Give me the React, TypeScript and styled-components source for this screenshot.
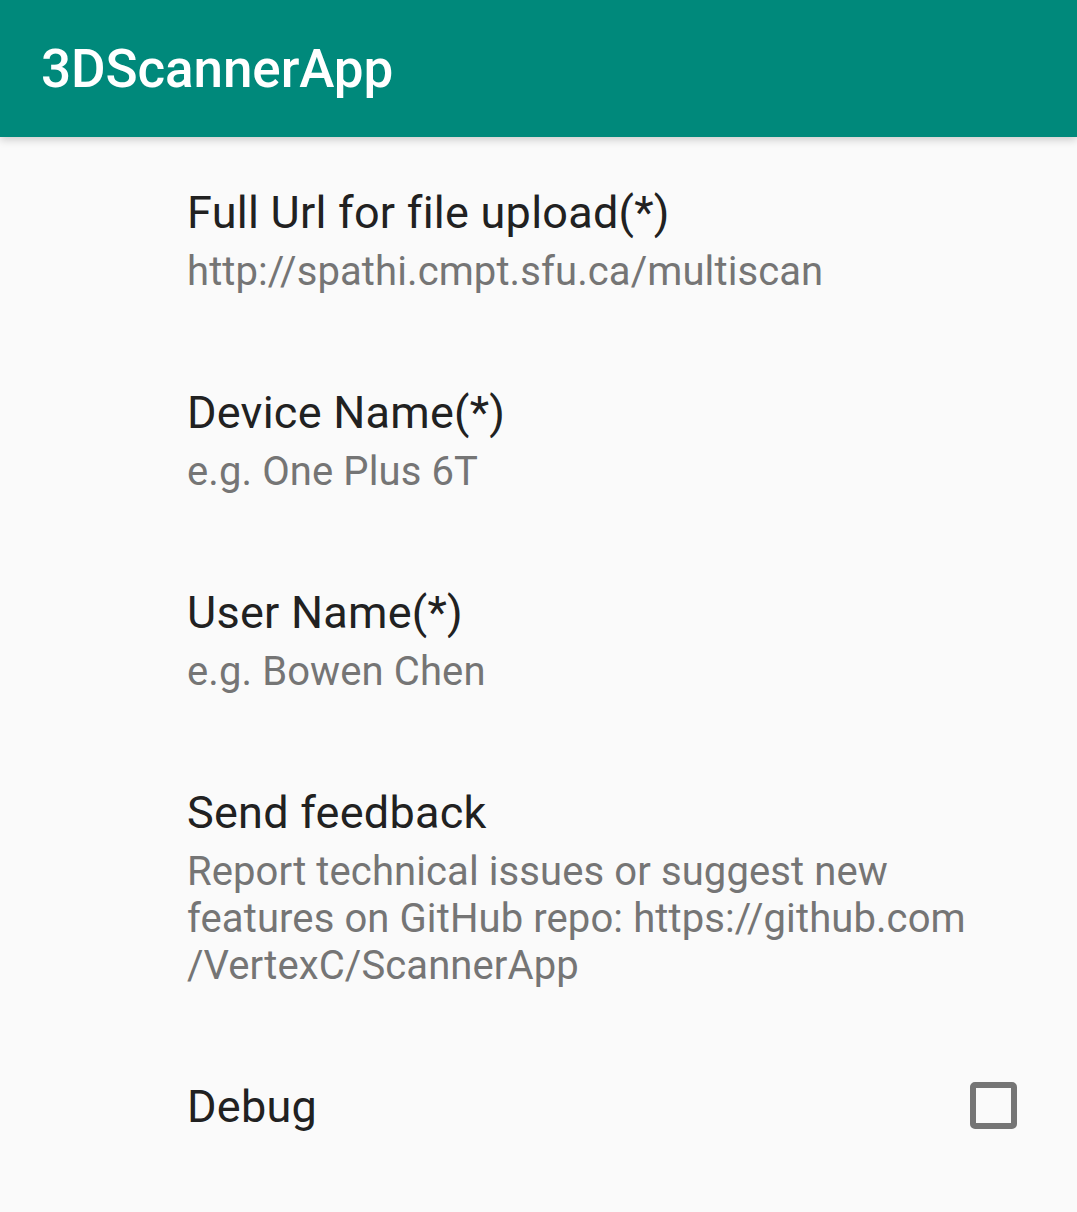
import React from "react";
import styled, { createGlobalStyle } from "styled-components";

const GlobalStyle = createGlobalStyle`
  html, body {
    margin: 0;
    padding: 0;
    background: #fafafa;
  }
  body {
    font-family: Roboto, "Noto Sans", "Liberation Sans", sans-serif;
  }
  * { box-sizing: border-box; }
`;

const Page = styled.div`
  width: 1077px;
  min-height: 1212px;
  background: #fafafa;
  display: flex;
  flex-direction: column;
`;

const AppBar = styled.header`
  height: 137px;
  background: #00897b;
  display: flex;
  align-items: center;
  padding-left: 41px;
  box-shadow: 0 3px 8px rgba(0, 0, 0, 0.18);
  position: relative;
  z-index: 1;
`;

const AppTitle = styled.h1`
  margin: 0;
  font-family: Roboto, sans-serif;
  font-weight: 500;
  font-size: 53px;
  color: #ffffff;
  letter-spacing: -0.1px;
`;

const List = styled.div`
  display: flex;
  flex-direction: column;
`;

const Item = styled.div`
  display: flex;
  align-items: center;
  padding: 50px 60px 42px 187px;
`;

const ItemText = styled.div`
  flex: 1;
  display: flex;
  flex-direction: column;
  gap: 9px;
`;

const Title = styled.div`
  font-size: 45px;
  line-height: 52px;
  letter-spacing: 0.25px;
  color: #212121;
`;

const Summary = styled.div`
  font-size: 40px;
  line-height: 47px;
  letter-spacing: 0.1px;
  color: #757575;
  white-space: nowrap;
`;

const CheckBox = styled.div`
  width: 47px;
  height: 47px;
  margin-top: -3px;
  border: 6px solid #757575;
  border-radius: 5px;
  flex: none;
`;

type Pref = { title: string; summary?: React.ReactNode };

const prefs: Pref[] = [
  { title: "Full Url for file upload(*)", summary: "http://spathi.cmpt.sfu.ca/multiscan" },
  { title: "Device Name(*)", summary: "e.g. One Plus 6T" },
  { title: "User Name(*)", summary: "e.g. Bowen Chen" },
  {
    title: "Send feedback",
    summary: (
      <>
        Report technical issues or suggest new
        <br />
        features on GitHub repo: https://github.com
        <br />
        /VertexC/ScannerApp
      </>
    ),
  },
];

export default function App() {
  return (
    <Page>
      <GlobalStyle />
      <AppBar>
        <AppTitle>3DScannerApp</AppTitle>
      </AppBar>
      <List>
        {prefs.map((p) => (
          <Item key={p.title}>
            <ItemText>
              <Title>{p.title}</Title>
              {p.summary && <Summary>{p.summary}</Summary>}
            </ItemText>
          </Item>
        ))}
        <Item>
          <ItemText>
            <Title>Debug</Title>
          </ItemText>
          <CheckBox />
        </Item>
      </List>
    </Page>
  );
}
